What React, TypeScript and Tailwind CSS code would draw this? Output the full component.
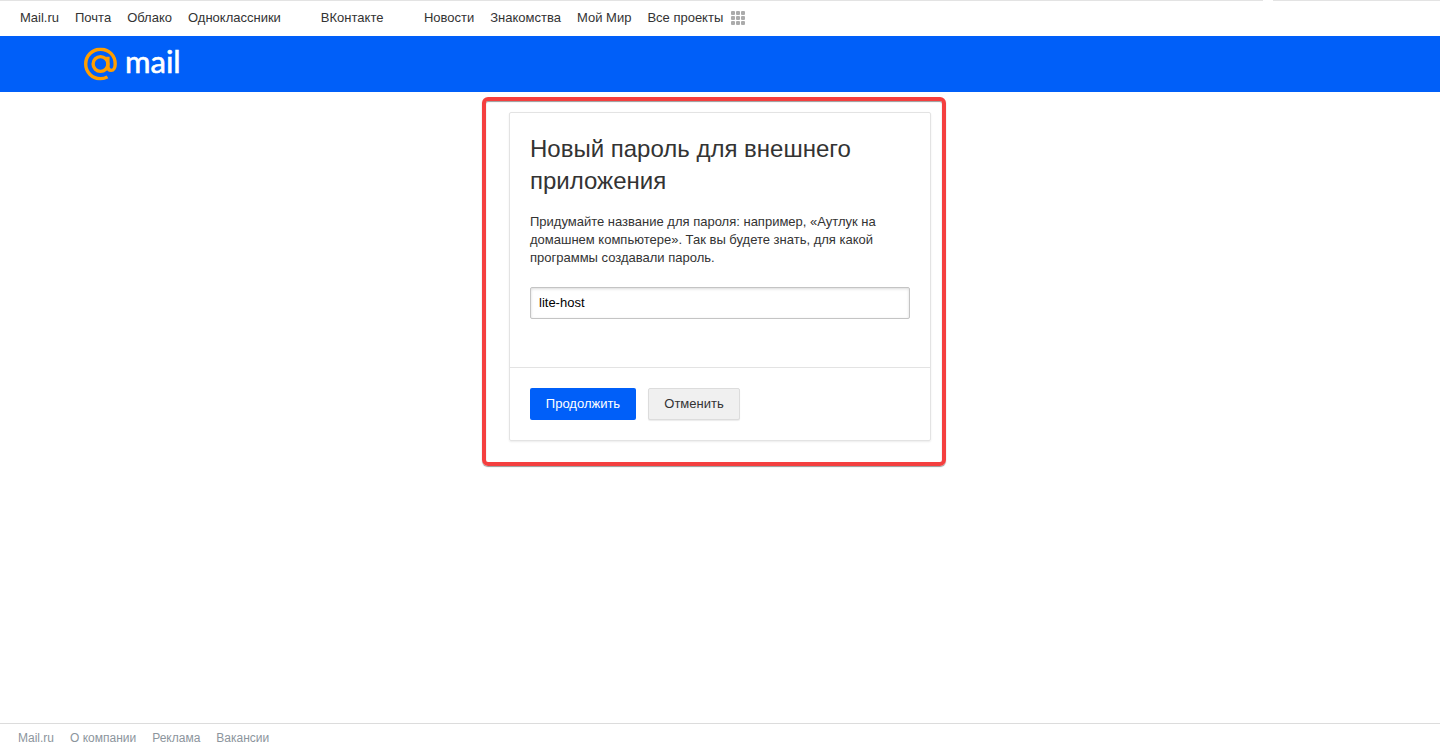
export default function App() {
  const top = ["Mail.ru", "Почта", "Облако", "Одноклассники"];
  const top2 = ["Новости", "Знакомства", "Мой Мир", "Все проекты"];
  return (
    <div className="relative flex h-[752px] flex-col overflow-hidden bg-white font-['Liberation_Sans',Arial,sans-serif] text-[#333]">
      <div className="flex h-px shrink-0">
        <div className="w-[1263px] bg-[#e3e3e3]" />
        <div className="w-[10px]" />
        <div className="flex-1 bg-[#e3e3e3]" />
      </div>
      <nav className="flex h-[35px] shrink-0 items-center pb-[2px] pl-5 text-[13px] text-[#333]">
        <div className="flex gap-4">
          {top.map((t) => (
            <a key={t}>{t}</a>
          ))}
        </div>
        <a className="ml-10">ВКонтакте</a>
        <div className="ml-[40.5px] flex gap-4">
          {top2.map((t) => (
            <a key={t}>{t}</a>
          ))}
        </div>
        <div className="ml-[7.5px] grid grid-cols-3 gap-[1px]">
          {Array.from({ length: 9 }).map((_, i) => (
            <span key={i} className="h-[4px] w-[4px] rounded-[1px] bg-[#ababab]" />
          ))}
        </div>
      </nav>
      <header className="flex h-14 shrink-0 items-center gap-2 bg-[#005ff9] pl-[84px]">
        <svg width="33" height="33" viewBox="0 0 33 33" fill="none" stroke="#ff9e00" strokeWidth="3.4" className="-translate-y-[0.5px]">
          <circle cx="16.5" cy="16.5" r="7.4" />
          <path d="M23.9 9.200v9.900c0 2.500 1.500 3.800 3.300 3.800 2.300 0 4-2.600 4-6.400C31.200 8 24.800 1.700 16.500 1.700 8.300 1.700 1.700 8.300 1.700 16.500S8.300 31.300 16.500 31.300c2.700 0 5-.7 7-1.900" />
        </svg>
        <span className="-translate-y-[3px] font-['Lato',sans-serif] text-[31px] leading-none text-white [-webkit-text-stroke:0.6px_white]">mail</span>
      </header>
      <main className="flex-1">
        <section className="mx-auto mt-5 w-[422px] rounded-[2px] border border-[#e3e3e3] shadow-[0_1px_2px_rgba(0,0,0,0.08)]">
          <div className="h-[254px] px-5 pt-5">
            <h1 className="text-2xl leading-8 font-normal text-[#333]">Новый пароль для внешнего приложения</h1>
            <p className="mt-4 text-[13px] leading-[18px] text-[#333]">
              Придумайте название для пароля: например, «Аутлук на домашнем компьютере». Так вы будете знать, для какой программы создавали пароль.
            </p>
            <div className="mt-5 flex h-8 items-center rounded-[2px] border border-[#c4c4c4] pl-2 text-[13px] text-black shadow-[inset_0_1px_3px_rgba(0,0,0,0.15)]">
              lite-host
            </div>
          </div>
          <div className="flex gap-3 border-t border-[#e3e3e3] px-5 pt-5 pb-5 text-[13px]">
            <button className="h-8 w-[106px] rounded-[2px] bg-[#005ff9] text-white">Продолжить</button>
            <button className="h-8 w-[92px] rounded-[2px] border border-[#dcdcdc] bg-[#f0f0f0] text-[#333] shadow-[0_1px_1px_rgba(0,0,0,0.08)]">Отменить</button>
          </div>
        </section>
      </main>
      <footer className="flex h-[29px] shrink-0 items-center gap-4 border-t border-[#dcdcdc] pl-[18px] text-[12px] text-[#8c959d]">
        <a>Mail.ru</a>
        <a>О компании</a>
        <a>Реклама</a>
        <a>Вакансии</a>
      </footer>
      <div className="pointer-events-none absolute top-[97px] left-[482px] h-[369px] w-[464px] rounded-[6px] border-4 border-[#f43f3f] shadow-[0_1px_1px_rgba(0,0,0,0.4),inset_0_1px_1px_rgba(0,0,0,0.4)]" />
    </div>
  );
}
